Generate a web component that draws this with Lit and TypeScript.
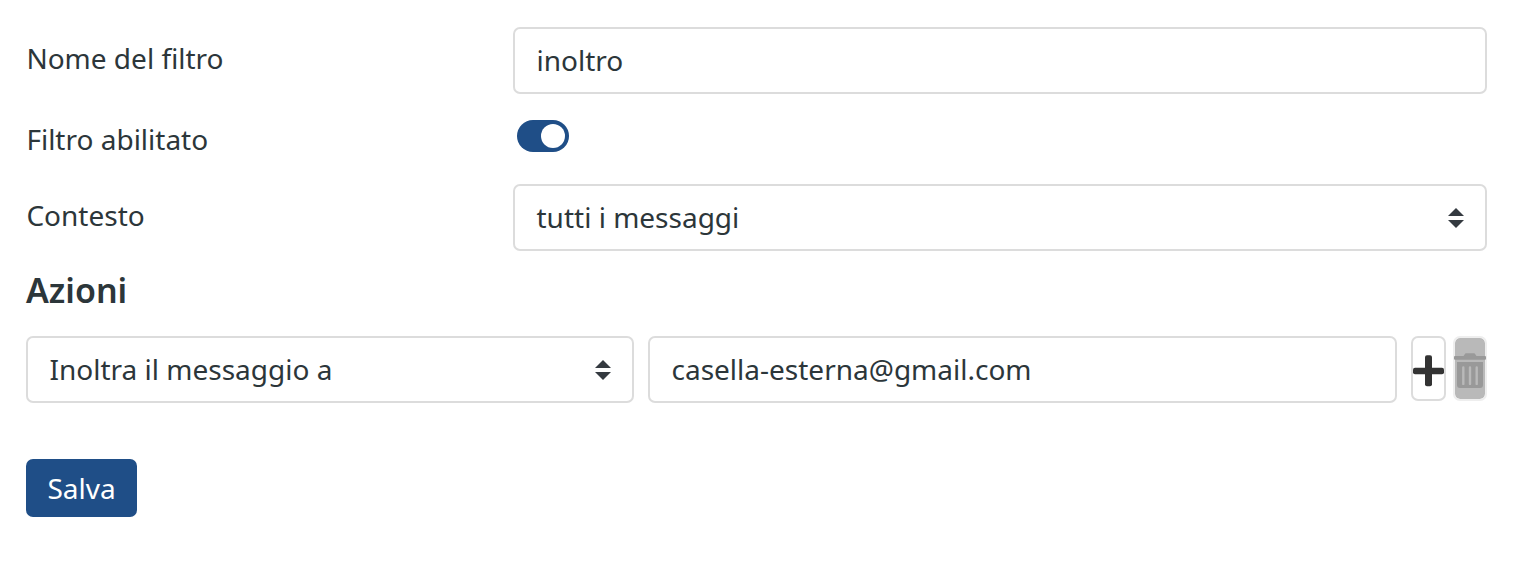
import { LitElement, html, css } from "lit";
import { customElement, property } from "lit/decorators.js";

const controlStyles = css`
  .control {
    box-sizing: border-box;
    display: flex;
    align-items: center;
    justify-content: space-between;
    width: 100%;
    height: 67px;
    margin: 0;
    padding: 0 21.5px;
    border: 2px solid #dcdcdc;
    border-radius: 7px;
    background: #fff;
    color: #2c363a;
    font: 28px/38px "Noto Sans", sans-serif;
    outline: none;
  }
`;

@customElement("text-field")
class TextField extends LitElement {
  static styles = [
    controlStyles,
    css`
      :host { display: block; }
      .input { padding-bottom: 2px; }
    `,
  ];
  @property() value = "";
  render() {
    return html`<input class="control input" type="text" .value=${this.value} />`;
  }
}

@customElement("select-field")
class SelectField extends LitElement {
  static styles = [
    controlStyles,
    css`
      :host { display: block; }
      .arrows { display: block; width: 16px; height: 20px; fill: #343a40; }
      .select { padding-right: 21px; }
      .value { padding-bottom: 2px; }
    `,
  ];
  @property() value = "";
  render() {
    return html`<div class="control select" role="combobox">
      <span class="value">${this.value}</span>
      <svg class="arrows" viewBox="0 0 16 20"><path d="M0 8 8 0l8 8zM0 12h16l-8 8z" /></svg>
    </div>`;
  }
}

@customElement("app-root")
class AppRoot extends LitElement {
  static styles = css`
    :host {
      display: block;
      box-sizing: border-box;
      height: 570px;
      padding: 27px 27px 0 26px;
      background: #fff;
      color: #2c363a;
      font: 28px/38px "Noto Sans", sans-serif;
    }
    .row {
      display: grid;
      grid-template-columns: 487px 1fr;
      align-items: start;
    }
    .name { height: 93px; }
    .enabled { height: 64px; }
    .context { height: 67px; }
    .label { padding-left: 0.4px; padding-top: 12px; }
    .enabled .label { padding-top: 0; }
    .switch {
      box-sizing: border-box;
      display: flex;
      justify-content: flex-end;
      width: 52px;
      height: 32px;
      margin-left: 4px;
      padding: 4px;
      border-radius: 16px;
      background: #1f4e87;
    }
    .knob { width: 24px; height: 24px; border-radius: 50%; background: #fff; }
    .title {
      margin: 15px 0 22px;
      font-size: 34px;
      line-height: 48px;
      font-weight: 600;
    }
    .actions {
      display: grid;
      grid-template-columns: 608px 749px 35px 34px;
      column-gap: 14px;
      align-items: start;
    }
    .tool {
      box-sizing: border-box;
      display: block;
      width: 100%;
      height: 65px;
      border: 2px solid #dcdcdc;
      border-radius: 7px;
      background: #fff;
      padding: 0;
    }
    .trash { margin-left: -7px; width: 34px; border-color: #eee; background: #b9b9b9; background-clip: padding-box; }
    .glyph { display: block; width: 31px; height: 61px; }
    .trash .glyph { width: 30px; }
    .save {
      display: block;
      width: 111px;
      height: 58px;
      margin-top: 56px;
      padding: 0;
      border: 0;
      border-radius: 7px;
      background: #1f4e87;
      color: #fff;
      font: 28px/38px "Noto Sans", sans-serif;
    }
  `;
  render() {
    return html`
      <div class="row name">
        <div class="label">Nome del filtro</div>
        <text-field value="inoltro"></text-field>
      </div>
      <div class="row enabled">
        <div class="label">Filtro abilitato</div>
        <div class="switch" role="switch" aria-checked="true"><span class="knob"></span></div>
      </div>
      <div class="row context">
        <div class="label">Contesto</div>
        <select-field value="tutti i messaggi"></select-field>
      </div>
      <h2 class="title">Azioni</h2>
      <div class="actions">
        <select-field value="Inoltra il messaggio a"></select-field>
        <text-field value="casella-esterna@gmail.com"></text-field>
        <button class="tool">
          <svg class="glyph" viewBox="0 0 31 61" fill="#333">
            <rect x="12" y="17.3" width="7" height="31" rx="2" />
            <rect x="0" y="29.7" width="31" height="6.6" rx="2" />
          </svg>
        </button>
        <button class="tool trash">
          <svg class="glyph" viewBox="0 0 30 61" fill="#999" overflow="visible">
            <path d="M8.5 18 10.5 15.2h9L21.5 18h8.5a1 1 0 0 1 1 1v1.7a1 1 0 0 1-1 1H0a1 1 0 0 1-1-1V19a1 1 0 0 1 1-1z" />
            <path d="M2 24h26v23a3 3 0 0 1-3 3H5a3 3 0 0 1-3-3z" />
            <path d="M8.3 29.5v16.4M15 29.5v16.4M21.7 29.5v16.4" stroke="#b9b9b9" stroke-width="2.4" stroke-linecap="round" />
          </svg>
        </button>
      </div>
      <button class="save">Salva</button>
    `;
  }
}
